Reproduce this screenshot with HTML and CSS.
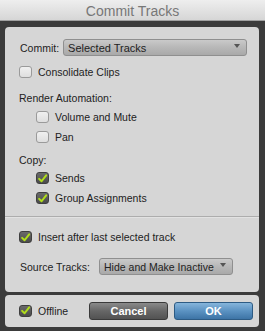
FILE: index.html
```html
<!DOCTYPE html>
<html lang="en">
<head>
    <meta charset="UTF-8">
    <meta name="viewport" content="width=device-width, initial-scale=1.0">
    <title>Commit Tracks</title>
    <link rel="stylesheet" href="styles.css">
</head>
<body>

    <div class="window">
        <!-- Barra de título -->
        <div class="titlebar">Commit Tracks</div>

        <div class="frame">
            <!-- Painel principal -->
            <div class="panel main-panel">
                <div class="section top-section">
                    <div class="row select-row">
                        <span class="label">Commit:</span>
                        <div class="select commit-select">Selected Tracks<span class="arrow"></span></div>
                    </div>

                    <div class="row check-row first-check">
                        <span class="check"></span>
                        <span>Consolidate Clips</span>
                    </div>

                    <div class="row heading render-heading">Render Automation:</div>
                    <div class="row check-row indent">
                        <span class="check"></span>
                        <span>Volume and Mute</span>
                    </div>
                    <div class="row check-row indent">
                        <span class="check"></span>
                        <span>Pan</span>
                    </div>

                    <div class="row heading copy-heading">Copy:</div>
                    <div class="row check-row indent">
                        <span class="check checked"><svg viewBox="0 0 12 12"><path d="M2.3 6.4 L5 9 L10 2.6"/></svg></span>
                        <span>Sends</span>
                    </div>
                    <div class="row check-row indent">
                        <span class="check checked"><svg viewBox="0 0 12 12"><path d="M2.3 6.4 L5 9 L10 2.6"/></svg></span>
                        <span>Group Assignments</span>
                    </div>
                </div>

                <div class="divider"></div>

                <div class="section bottom-section">
                    <div class="row check-row">
                        <span class="check checked"><svg viewBox="0 0 12 12"><path d="M2.3 6.4 L5 9 L10 2.6"/></svg></span>
                        <span>Insert after last selected track</span>
                    </div>
                    <div class="row select-row source-row">
                        <span class="label">Source Tracks:</span>
                        <div class="select source-select">Hide and Make Inactive<span class="arrow"></span></div>
                    </div>
                </div>
            </div>

            <!-- Rodapé com botões -->
            <div class="panel footer">
                <div class="row check-row">
                    <span class="check checked"><svg viewBox="0 0 12 12"><path d="M2.3 6.4 L5 9 L10 2.6"/></svg></span>
                    <span>Offline</span>
                </div>
                <div class="buttons">
                    <button class="btn btn-cancel">Cancel</button>
                    <button class="btn btn-ok">OK</button>
                </div>
            </div>
        </div>
    </div>

</body>
</html>
```

FILE: styles.css
```css
* {
    box-sizing: border-box;
    margin: 0;
    padding: 0;
}

body {
    font-family: "Liberation Sans", Arial, sans-serif;
    font-size: 10.5px;
    color: #222;
    background-color: #3b3b3b;
    width: 265px;
    height: 331px;
    overflow: hidden;
}

.window {
    display: flex;
    flex-direction: column;
    height: 331px;
}

/* Barra de título */
.titlebar {
    height: 21px;
    line-height: 22px;
    text-align: center;
    font-size: 14px;
    color: #777;
    background: linear-gradient(#eeeeee, #d6d6d6);
    border-bottom: 1px solid #a0a0a0;
    flex-shrink: 0;
}

.frame {
    display: flex;
    flex-direction: column;
    gap: 3px;
    padding: 6px 6px 0 5px;
}

.panel {
    background-color: #d6d6d6;
    border-radius: 4px;
}

.main-panel {
    height: 265px;
    display: flex;
    flex-direction: column;
}

.section {
    display: flex;
    flex-direction: column;
    padding-left: 14px;
}

.top-section {
    padding-top: 12px;
    height: 189px;
}

.bottom-section {
    padding-top: 10px;
}

.divider {
    height: 1px;
    background-color: #adadad;
    box-shadow: 0 1px 0 #e2e2e2;
}

.row {
    display: flex;
    align-items: center;
    height: 20px;
}

.select-row {
    height: 17px;
    padding-left: 1px;
}

.select-row .label {
    margin-right: 4px;
}

.first-check {
    margin-top: 6px;
}

.heading {
    height: 18px;
    padding-left: 0;
}

.render-heading {
    margin-top: 7px;
}

.copy-heading {
    margin-top: 5px;
    height: 16px;
}

.indent {
    padding-left: 17px;
}

.source-row {
    margin-top: 11px;
}

/* Caixa de seleção */
.check {
    width: 13px;
    height: 12px;
    border: 1px solid #9a9a9a;
    border-radius: 3px;
    background: linear-gradient(#f0f0f0, #dedede);
    margin-right: 6px;
    display: flex;
    align-items: center;
    justify-content: center;
    flex-shrink: 0;
}

.check.checked {
    border-color: #3f3f3f;
    background: linear-gradient(#6a6a6a, #4b4b4b);
}

.check svg {
    width: 11px;
    height: 11px;
}

.check svg path {
    fill: none;
    stroke: #b0de1a;
    stroke-width: 2.2;
    stroke-linecap: round;
    stroke-linejoin: round;
}

/* Menu suspenso */
.select {
    position: relative;
    height: 17px;
    line-height: 16px;
    padding-left: 4px;
    border: 1px solid #8f8f8f;
    border-radius: 3px;
    background: linear-gradient(#cacaca, #b9b9b9 45%, #a9a9a9);
    font-size: 11px;
}

.commit-select {
    width: 184px;
}

.source-select {
    width: 134px;
    margin-left: 5px;
    font-size: 10.5px;
}

.arrow {
    position: absolute;
    right: 6px;
    top: 4px;
    width: 0;
    height: 0;
    border-left: 3.5px solid transparent;
    border-right: 3.5px solid transparent;
    border-top: 4px solid #555;
}

/* Rodapé */
.footer {
    height: 32px;
    display: flex;
    align-items: center;
    justify-content: space-between;
    padding: 0 6px 1px 14px;
}

.buttons {
    display: flex;
    gap: 6px;
}

.btn {
    width: 79px;
    height: 18px;
    border-radius: 3px;
    font-family: "Liberation Sans", Arial, sans-serif;
    font-size: 11px;
    font-weight: bold;
    color: #fff;
    cursor: pointer;
}

.btn-cancel {
    border: 1px solid #3a3a3a;
    background: linear-gradient(#8a8a8a, #666 50%, #525252);
}

.btn-ok {
    border: 1px solid #2d5b84;
    background: linear-gradient(#86b5db, #5b92c2 50%, #3d74a6);
}
```
